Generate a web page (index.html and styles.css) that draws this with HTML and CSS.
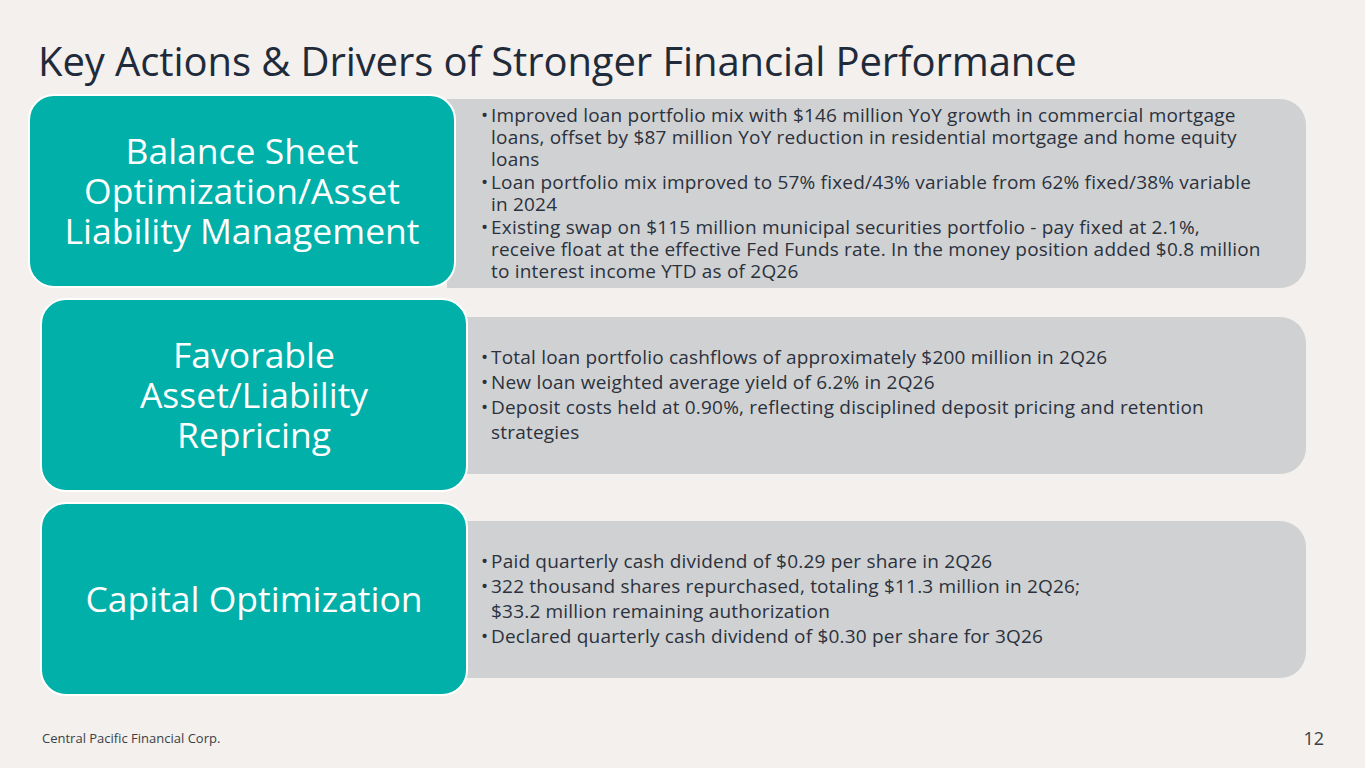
FILE: index.html
```html
<!DOCTYPE html>
<html lang="en">
<head>
<meta charset="utf-8">
<title>Key Actions &amp; Drivers of Stronger Financial Performance</title>
<link rel="stylesheet" href="styles.css">
</head>
<body>
<div class="slide">
  <h1 class="title">Key Actions &amp; Drivers of Stronger Financial Performance</h1>

  <div class="rows">
    <div class="row row-first">
      <div class="tile"><span class="tile-line">Balance Sheet</span><span class="tile-line">Optimization/Asset</span><span class="tile-line">Liability Management</span></div>
      <div class="panel panel-tall">
        <ul class="bullets bullets-tight">
          <li>Improved loan portfolio mix with $146 million YoY growth in commercial mortgage loans, offset by $87 million YoY reduction in residential mortgage and home equity loans</li>
          <li>Loan portfolio mix improved to 57% fixed/43% variable from 62% fixed/38% variable in 2024</li>
          <li>Existing swap on $115 million municipal securities portfolio - pay fixed at 2.1%, receive float at the effective Fed Funds rate. In the money position added $0.8 million to interest income YTD as of 2Q26</li>
        </ul>
      </div>
    </div>

    <div class="row">
      <div class="tile"><span class="tile-line">Favorable</span><span class="tile-line">Asset/Liability</span><span class="tile-line">Repricing</span></div>
      <div class="panel">
        <ul class="bullets">
          <li>Total loan portfolio cashflows of approximately $200 million in 2Q26</li>
          <li>New loan weighted average yield of 6.2% in 2Q26</li>
          <li>Deposit costs held at 0.90%, reflecting disciplined deposit pricing and retention strategies</li>
        </ul>
      </div>
    </div>

    <div class="row">
      <div class="tile"><span class="tile-line">Capital Optimization</span></div>
      <div class="panel">
        <ul class="bullets">
          <li>Paid quarterly cash dividend of $0.29 per share in 2Q26</li>
          <li>322 thousand shares repurchased, totaling $11.3 million in 2Q26;<br>$33.2 million remaining authorization</li>
          <li>Declared quarterly cash dividend of $0.30 per share for 3Q26</li>
        </ul>
      </div>
    </div>
  </div>

  <footer class="footer">
    <span class="company">Central Pacific Financial Corp.</span>
    <span class="page">12</span>
  </footer>
</div>
</body>
</html>
```

FILE: styles.css
```css
html, body {
  margin: 0;
  padding: 0;
}

body {
  background: #f3f0ed;
  font-family: "Open Sans", "Liberation Sans", sans-serif;
  color: #2b323d;
}

.slide {
  width: 1365px;
  height: 768px;
  display: flex;
  flex-direction: column;
  overflow: hidden;
}

.title {
  margin: 36px 0 0 38px;
  font-size: 40px;
  font-weight: 400;
  line-height: 50px;
  color: #1f2b3b;
  letter-spacing: -0.09px;
}

.rows {
  display: flex;
  flex-direction: column;
  gap: 10px;
  margin-top: 8px;
}

.row {
  display: flex;
  align-items: center;
  margin-left: 40px;
  width: 1266px;
  height: 194px;
}

.row-first {
  margin-left: 28px;
  width: 1278px;
}

.tile {
  position: relative;
  z-index: 1;
  box-sizing: border-box;
  flex: 0 0 428px;
  height: 194px;
  border: 2px solid #ffffff;
  border-radius: 26px;
  background: #00b0a9;
  color: #ffffff;
  font-size: 35.5px;
  text-align: center;
  display: flex;
  flex-direction: column;
  align-items: center;
  justify-content: center;
  padding-bottom: 2px;
}

.tile-line {
  display: block;
  height: 40px;
  line-height: 40px;
  white-space: nowrap;
}

.panel {
  flex: 1;
  margin-left: -9px;
  height: 157px;
  background: #d0d1d3;
  border-radius: 0 26px 26px 0;
  display: flex;
  align-items: center;
  padding-left: 23px;
}

.panel-tall {
  height: 189px;
  margin-top: 4px;
  padding-left: 35px;
}

.bullets {
  list-style: none;
  margin: 0;
  padding: 0;
  width: 785px;
  font-size: 19px;
  line-height: 25px;
  letter-spacing: 0.2px;
}

.bullets li {
  position: relative;
  padding-left: 9px;
}

.bullets li::before {
  content: "•";
  position: absolute;
  left: -1px;
  top: 0;
}

.bullets-tight {
  line-height: 22px;
}

.bullets-tight li + li {
  margin-top: 1px;
}

.footer {
  margin-top: auto;
  height: 60px;
  display: flex;
  justify-content: space-between;
  align-items: center;
  padding: 2px 41px 0 42px;
}

.company {
  font-size: 13px;
  color: #3a3f47;
}

.page {
  font-size: 18px;
  color: #3a3f47;
}
```
